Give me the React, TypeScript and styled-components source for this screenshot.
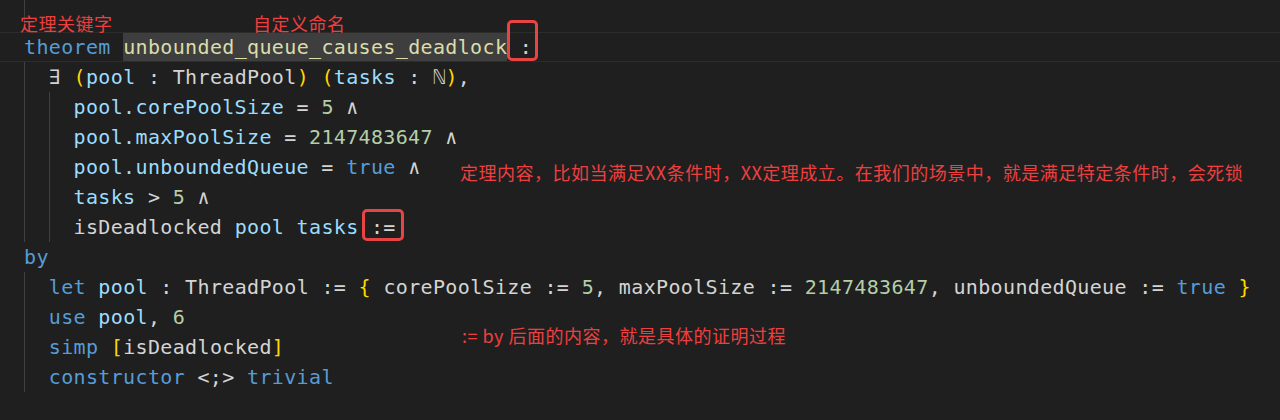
import React from 'react'
import styled, { createGlobalStyle } from 'styled-components'

// one monospace cell: 20px DejaVu (12.04) + 0.35 spacing
const CELL = 12.39

const GlobalStyle = createGlobalStyle`
    html, body {
        margin: 0;
        padding: 0;
        background: #1f1f1f;
    }
`

const Editor = styled.div`
    position: relative;
    width: 1280px;
    height: 420px;
    overflow: hidden;
    background: #1f1f1f;
    font-family: "DejaVu Sans Mono", "Liberation Mono", monospace;
    font-size: 20px;
    letter-spacing: 0.35px;
    color: #d4d4d4;
`

const Code = styled.div`
    display: flex;
    flex-direction: column;
`

const Line = styled.div<{ $current?: boolean; $first?: boolean }>`
    box-sizing: border-box;
    height: ${p => (p.$first ? 32 : 30)}px;
    padding-left: 24px;
    white-space: pre;
    line-height: 28px;
    border-top: 1px solid ${p => (p.$current ? '#2c2c2c' : 'transparent')};
    border-bottom: 1px solid ${p => (p.$current ? '#2c2c2c' : 'transparent')};
`

const Guide = styled.span`
    display: inline-block;
    box-sizing: border-box;
    width: ${CELL * 2}px;
    height: 30px;
    margin-top: -1px;
    vertical-align: top;
    border-left: 1px solid #404040;
`

const Kw = styled.span`
    color: #569cd6;
`
const Var = styled.span`
    color: #9cdcfe;
`
const Num = styled.span`
    color: #b5cea8;
`
const Brk = styled.span`
    color: #ffd700;
`
const Name = styled.span`
    display: inline-block;
    color: #dcdcaa;
    background: #3e3e3e;
    line-height: 28px;
`

const Boxed = styled.span<{ $t: number; $b: number; $l: number; $r: number }>`
    position: relative;
    &::after {
        content: '';
        position: absolute;
        top: ${p => p.$t}px;
        bottom: ${p => p.$b}px;
        left: ${p => p.$l}px;
        right: ${p => p.$r}px;
        border: 3px solid #e84444;
        border-radius: 5px;
    }
`

const Note = styled.div<{ $x: number; $y: number }>`
    position: absolute;
    left: ${p => p.$x}px;
    top: ${p => p.$y}px;
    font-family: "Noto Sans CJK SC", "Noto Sans", sans-serif;
    font-size: 18px;
    line-height: 24px;
    letter-spacing: 0.5px;
    color: #ee3f3f;
    white-space: nowrap;
`

const App: React.FC = () => {
    return (
        <Editor>
            <GlobalStyle />
            <Code>
                <Line $first><Guide /></Line>
                <Line $current>
                    <Kw>theorem</Kw> <Name>unbounded_queue_causes_deadlock</Name>
                    <Boxed $t={-15} $b={-2} $l={0} $r={-6}> :</Boxed>
                </Line>
                <Line>
                    <Guide />∃ <Brk>(</Brk><Var>pool</Var> : ThreadPool<Brk>)</Brk> <Brk>(</Brk><Var>tasks</Var> : ℕ<Brk>)</Brk>,
                </Line>
                <Line>
                    <Guide /><Guide /><Var>pool.corePoolSize</Var> = <Num>5</Num> ∧
                </Line>
                <Line>
                    <Guide /><Guide /><Var>pool.maxPoolSize</Var> = <Num>2147483647</Num> ∧
                </Line>
                <Line>
                    <Guide /><Guide /><Var>pool.unboundedQueue</Var> = <Kw>true</Kw> ∧
                </Line>
                <Line>
                    <Guide /><Guide /><Var>tasks</Var> &gt; <Num>5</Num> ∧
                </Line>
                <Line>
                    <Guide /><Guide />isDeadlocked <Var>pool</Var> <Var>tasks</Var>
                    <Boxed $t={-6} $b={-2} $l={3} $r={-8}> :=</Boxed>
                </Line>
                <Line>
                    <Kw>by</Kw>
                </Line>
                <Line>
                    <Guide /><Kw>let</Kw> <Var>pool</Var> : ThreadPool := <Brk>{'{'}</Brk> corePoolSize := <Num>5</Num>, maxPoolSize := <Num>2147483647</Num>, unboundedQueue := <Kw>true</Kw> <Brk>{'}'}</Brk>
                </Line>
                <Line>
                    <Guide /><Kw>use</Kw> <Var>pool</Var>, <Num>6</Num>
                </Line>
                <Line>
                    <Guide /><Kw>simp</Kw> <Brk>[</Brk>isDeadlocked<Brk>]</Brk>
                </Line>
                <Line>
                    <Guide /><Kw>constructor</Kw> &lt;;&gt; <Kw>trivial</Kw>
                </Line>
            </Code>

            <Note $x={20} $y={11}>定理关键字</Note>
            <Note $x={253} $y={11}>自定义命名</Note>
            <Note $x={460} $y={160}>定理内容，比如当满足XX条件时，XX定理成立。在我们的场景中，就是满足特定条件时，会死锁</Note>
            <Note $x={462} $y={323}>:= by 后面的内容，就是具体的证明过程</Note>
        </Editor>
    )
}

export default App
